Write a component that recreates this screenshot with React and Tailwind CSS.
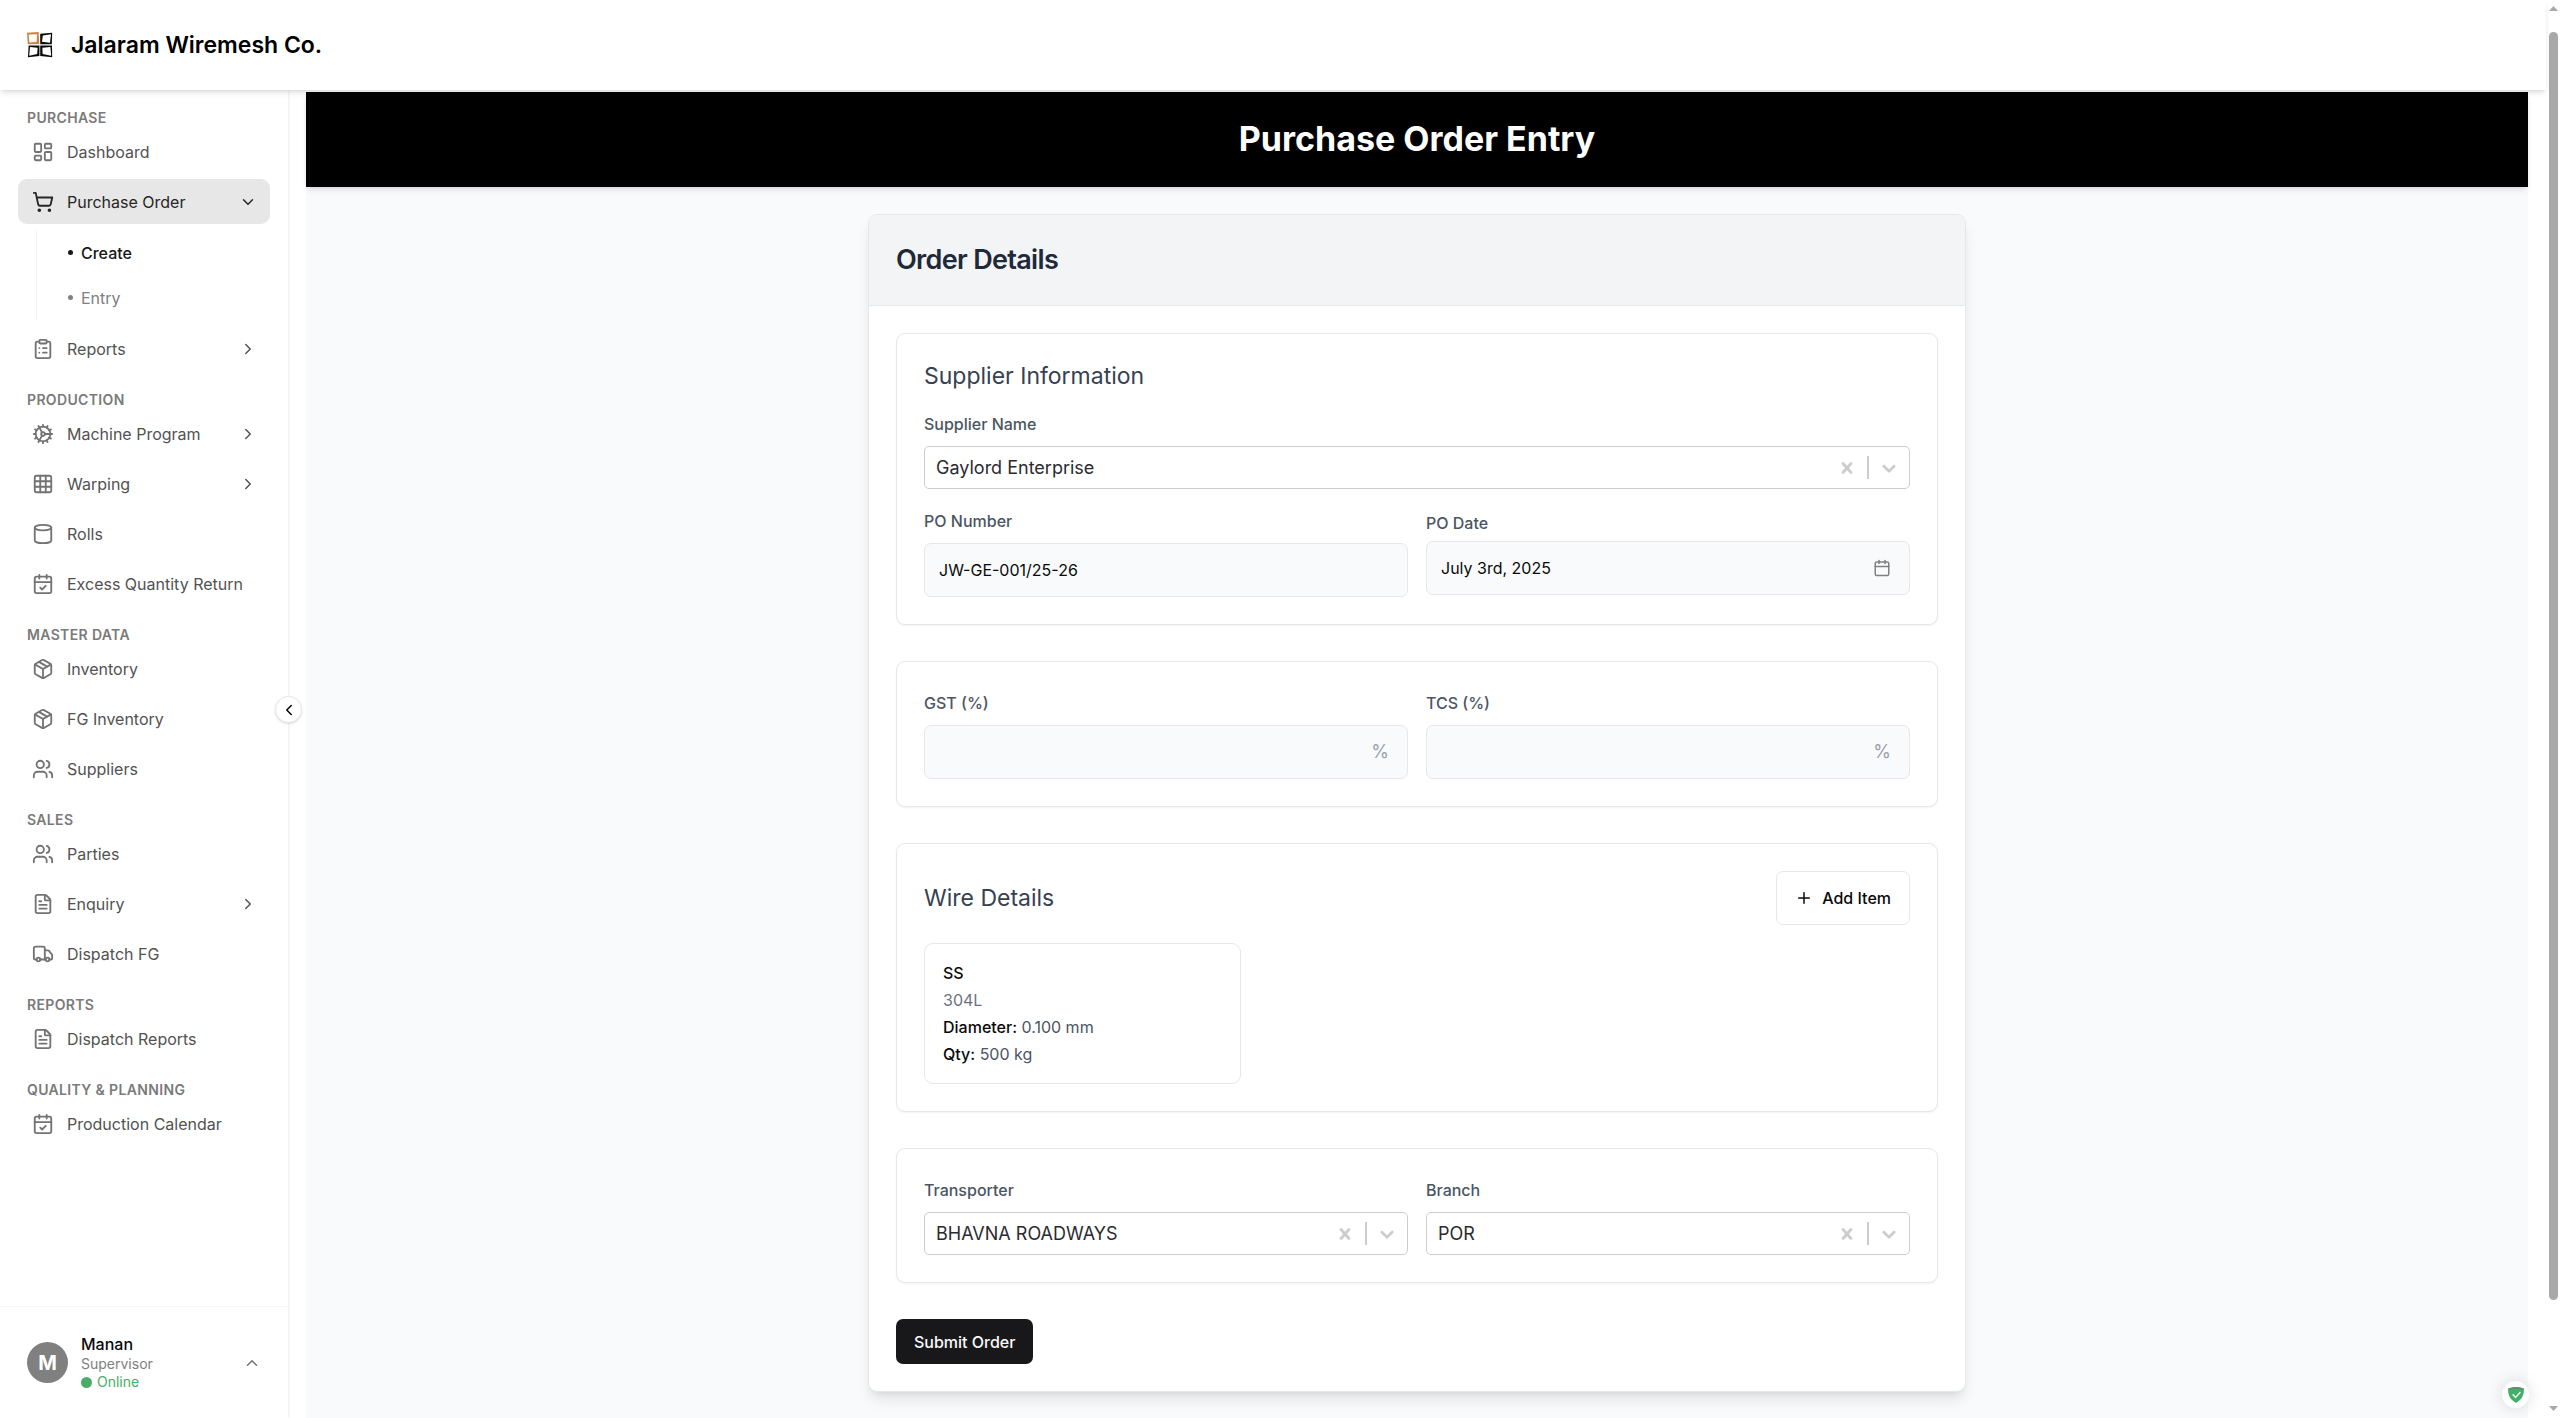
import React from "react";
import {
  LayoutDashboard, ShoppingCart, ClipboardList, Cog, Grid3x3, Cylinder, CalendarCheck,
  Package, Users, FileText, Truck, ChevronDown, ChevronRight, ChevronLeft, ChevronUp,
  Calendar, Plus,
} from "lucide-react";

const groups = [
  {
    title: "Purchase",
    items: [
      { label: "Dashboard", icon: LayoutDashboard },
      {
        label: "Purchase Order", icon: ShoppingCart, open: true,
        children: [{ label: "Create", active: true }, { label: "Entry" }],
      },
      { label: "Reports", icon: ClipboardList, expandable: true },
    ],
  },
  {
    title: "Production",
    items: [
      { label: "Machine Program", icon: Cog, expandable: true },
      { label: "Warping", icon: Grid3x3, expandable: true },
      { label: "Rolls", icon: Cylinder },
      { label: "Excess Quantity Return", icon: CalendarCheck },
    ],
  },
  {
    title: "Master Data",
    items: [
      { label: "Inventory", icon: Package },
      { label: "FG Inventory", icon: Package },
      { label: "Suppliers", icon: Users },
    ],
  },
  {
    title: "Sales",
    items: [
      { label: "Parties", icon: Users },
      { label: "Enquiry", icon: FileText, expandable: true },
      { label: "Dispatch FG", icon: Truck },
    ],
  },
  { title: "Reports", items: [{ label: "Dispatch Reports", icon: FileText }] },
  { title: "Quality & Planning", items: [{ label: "Production Calendar", icon: CalendarCheck }] },
];

function Logo() {
  return (
    <svg width="26" height="26" viewBox="0 0 26 26" fill="none" aria-hidden="true">
      <path fillRule="evenodd" fill="#c9813f" d="M0 .8 L11.6 0 L12.2 12 L.8 12.2 Z M1.6 2.4 L2.4 10.6 L9.6 10 L10 2.2 Z" />
      <path fillRule="evenodd" fill="#0a0a0a" d="M13.2 1.8 L25.2 .8 L24.8 12.2 L13.2 12.2 Z M15.8 3.6 L15 9.8 L23 10.8 L24 2.2 Z" />
      <path fillRule="evenodd" fill="#0a0a0a" d="M1.6 13.4 L12.4 13.4 V24 L1 25.2 Z M3 15 L2.2 23.8 L10.2 22 L10.6 15.8 Z" />
      <path fillRule="evenodd" fill="#0a0a0a" d="M13.2 13.4 L25 13.4 L25.2 25.2 L13.2 24 Z M15.4 15.8 L15.6 22 L24.2 23.8 L23.4 15 Z" />
    </svg>
  );
}

function NavItem({ item }) {
  const Icon = item.icon;
  if (item.open) {
    return (
      <li className="flex flex-col gap-[5px]">
        <button type="button" aria-expanded="true" className="flex h-[45px] w-full items-center gap-[13px] rounded-[9px] bg-[#e7e7e7] pr-[13px] pl-[14px] text-left text-[#262626]">
          <Icon size={22} strokeWidth={2} />
          <span className="flex-1">{item.label}</span>
          <ChevronDown size={18} />
        </button>
        <ul className="ml-[18px] border-l border-gray-100 py-px pl-[31px]">
          {item.children.map((child) => (
            <li key={child.label}>
              <a
                href="#"
                className={
                  child.active
                    ? "flex h-[45px] items-center gap-2 font-medium text-[#171717]"
                    : "flex h-[45px] items-center gap-2 text-[#808080]"
                }
              >
                <span className="size-[5px] rounded-full bg-current" />
                {child.label}
              </a>
            </li>
          ))}
        </ul>
      </li>
    );
  }
  const cls = "flex h-[45px] w-full items-center gap-[13px] rounded-[9px] pr-[13px] pl-[14px] text-left text-[#525252]";
  const body = (
    <>
      <Icon size={22} className="text-[#737373]" />
      <span className="flex-1 whitespace-nowrap">{item.label}</span>
      {item.expandable && <ChevronRight size={18} />}
    </>
  );
  return (
    <li>
      {item.expandable ? (
        <button type="button" aria-expanded="false" className={cls}>{body}</button>
      ) : (
        <a href="#" className={cls}>{body}</a>
      )}
    </li>
  );
}

function Sidebar() {
  return (
    <aside className="relative flex w-[288px] shrink-0 flex-col bg-white shadow-[1px_0_2px_rgba(15,23,42,0.08)]">
      <nav className="flex flex-1 flex-col gap-5 px-[18px] pt-[19px]">
        {groups.map((g) => (
          <section key={g.title}>
            <h2 className="mb-[2px] pl-[9px] text-[14px] leading-[18px] font-semibold tracking-wide text-[#7a7a7a] uppercase">
              {g.title}
            </h2>
            <ul className="flex flex-col gap-[5px]">
              {g.items.map((i) => <NavItem key={i.label} item={i} />)}
            </ul>
          </section>
        ))}
      </nav>
      <div className="border-t border-neutral-100 px-[18px] py-[18px]">
        <button type="button" className="flex w-full items-center gap-[13px] py-[9px] pr-[9px] pl-[9px] text-left">
          <span className="flex size-[41px] items-center justify-center rounded-full bg-[#808080] text-[20px] font-bold text-white">M</span>
          <span className="flex flex-1 flex-col">
            <span className="leading-[20px] font-medium text-[#0a0a0a]">Manan</span>
            <span className="text-[14px] leading-[19px] text-[#808080]">Supervisor</span>
            <span className="flex items-center gap-[5px] text-[14px] leading-[18px] text-[#48ad67]">
              <span className="size-[11px] rounded-full bg-current" />
              Online
            </span>
          </span>
          <ChevronUp size={18} className="text-[#737373]" />
        </button>
      </div>
      <button type="button" aria-label="Collapse sidebar" className="absolute top-[606px] -right-[14px] flex size-[27px] items-center justify-center rounded-full border border-gray-200 bg-white text-black shadow-sm">
        <ChevronLeft size={18} />
      </button>
    </aside>
  );
}

function Field({ id, label, children }) {
  return (
    <div>
      <label htmlFor={id} className="mb-2 block leading-[28px] font-medium text-[#4b5563]">{label}</label>
      {children}
    </div>
  );
}

function SelectBox({ id, label, value }) {
  return (
    <Field id={id} label={label}>
      <div className="flex h-[43px] items-center rounded-[5px] border border-[#cccccc] bg-white text-[#cccccc]">
        <select id={id} defaultValue={value} className="h-full min-w-0 flex-1 appearance-none bg-transparent pl-[11px] text-[18px] text-[#2b2b2f] outline-none">
          <option>{value}</option>
        </select>
        <button type="button" aria-label={"Clear " + label} className="px-[9px]">
          <svg width="22" height="22" viewBox="0 0 20 20" fill="currentColor" stroke="currentColor" strokeWidth="0.4">
            <path d="M14.348 14.849c-0.469 0.469-1.229 0.469-1.697 0l-2.651-3.030-2.651 3.029c-0.469 0.469-1.229 0.469-1.697 0-0.469-0.469-0.469-1.229 0-1.697l2.758-3.15-2.759-3.152c-0.469-0.469-0.469-1.228 0-1.697s1.228-0.469 1.697 0l2.652 3.031 2.651-3.031c0.469-0.469 1.228-0.469 1.697 0s0.469 1.229 0 1.697l-2.758 3.152 2.758 3.15c0.469 0.469 0.469 1.229 0 1.698z" />
          </svg>
        </button>
        <span className="h-[23px] w-[2px] bg-[#cccccc]" />
        <span className="px-[9px]">
          <svg width="22" height="22" viewBox="0 0 20 20" fill="currentColor" stroke="currentColor" strokeWidth="0.4" aria-hidden="true">
            <path d="M4.516 7.548c0.436-0.446 1.043-0.481 1.576 0l3.908 3.747 3.908-3.747c0.533-0.481 1.141-0.446 1.574 0 0.436 0.445 0.408 1.197 0 1.615-0.406 0.418-4.695 4.502-4.695 4.502-0.217 0.223-0.502 0.335-0.787 0.335s-0.57-0.112-0.789-0.335c0 0-4.287-4.084-4.695-4.502s-0.436-1.17 0-1.615z" />
          </svg>
        </span>
      </div>
    </Field>
  );
}

function PercentField({ id, label }) {
  return (
    <Field id={id} label={label}>
      <div className="flex h-[54px] items-center rounded-[7px] border border-gray-200 bg-gray-50 pr-[18px]">
        <input id={id} type="text" inputMode="decimal" className="h-full min-w-0 flex-1 bg-transparent pl-[14px] outline-none" />
        <span className="text-[18px] text-gray-400">%</span>
      </div>
    </Field>
  );
}

function Panel({ children }) {
  return <section className="rounded-[9px] border border-gray-200 bg-white p-[27px] shadow-xs">{children}</section>;
}

function OrderForm() {
  return (
    <form className="flex flex-col items-stretch gap-9 p-[27px]" onSubmit={(e) => e.preventDefault()}>
      <Panel>
        <h3 className="mb-[18px] text-[23px] leading-[31px] text-gray-700">Supplier Information</h3>
        <SelectBox id="supplier" label="Supplier Name" value="Gaylord Enterprise" />
        <div className="mt-[18px] grid grid-cols-2 gap-[18px]">
          <Field id="po-number" label="PO Number">
            <input id="po-number" type="text" defaultValue="JW-GE-001/25-26" className="h-[54px] w-full rounded-[7px] border border-gray-200 bg-gray-50 px-[14px] text-[#0a0a0a] outline-none" />
          </Field>
          <div className="flex flex-col gap-2 pt-[6px]">
            <label htmlFor="po-date" className="leading-[20px] font-medium text-[#4b5563]">PO Date</label>
            <button id="po-date" type="button" className="flex h-[54px] w-full items-center justify-between rounded-[7px] border border-gray-200 bg-gray-50 pr-[18px] pl-[14px] text-[#0a0a0a]">
              July 3rd, 2025
              <Calendar size={18} className="text-[#808080]" />
            </button>
          </div>
        </div>
      </Panel>
      <Panel>
        <div className="grid grid-cols-2 gap-[18px]">
          <PercentField id="gst" label="GST (%)" />
          <PercentField id="tcs" label="TCS (%)" />
        </div>
      </Panel>
      <Panel>
        <div className="mb-[18px] flex items-center justify-between">
          <h3 className="text-[23px] leading-[31px] text-gray-700">Wire Details</h3>
          <button type="button" className="flex h-[54px] items-center gap-[9px] rounded-[7px] border border-gray-200 bg-white px-[18px] font-medium text-[#0a0a0a]">
            <Plus size={18} />
            Add Item
          </button>
        </div>
        <div className="grid grid-cols-3 gap-[18px]">
          <article className="flex flex-col gap-[5px] rounded-[9px] border border-gray-200 p-[18px] leading-[22px] text-gray-600">
            <p className="font-medium text-[#0a0a0a]">SS</p>
            <p className="text-gray-500">304L</p>
            <p><span className="font-medium text-[#0a0a0a]">Diameter:</span> 0.100 mm</p>
            <p><span className="font-medium text-[#0a0a0a]">Qty:</span> 500 kg</p>
          </article>
        </div>
      </Panel>
      <Panel>
        <div className="grid grid-cols-2 gap-[18px]">
          <SelectBox id="transporter" label="Transporter" value="BHAVNA ROADWAYS" />
          <SelectBox id="branch" label="Branch" value="POR" />
        </div>
      </Panel>
      <button type="submit" className="h-[45px] self-start rounded-[7px] bg-[#18181b] px-[18px] font-medium text-[#fafafa]">Submit Order</button>
    </form>
  );
}

export default function App() {
  return (
    <div className="flex min-h-screen bg-white font-[Inter,sans-serif] text-[16px] leading-[24px]">
      <div className="flex min-w-0 flex-1 flex-col">
        <header className="relative z-10 flex h-[90px] items-center gap-[18px] bg-white pl-[27px] shadow-md">
          <Logo />
          <h1 className="text-[23px] font-semibold text-black">Jalaram Wiremesh Co.</h1>
        </header>
        <div className="flex flex-1">
          <Sidebar />
          <main className="flex min-w-0 flex-1 flex-col px-[18px] pt-[2px]">
            <div className="flex flex-1 flex-col bg-gray-50">
              <div className="bg-black pt-[26px] pb-[28px] text-center shadow-md">
                <h2 className="text-[34px] leading-[41px] font-bold text-white">Purchase Order Entry</h2>
              </div>
              <div className="mx-auto w-full max-w-[1152px] px-[27px] pt-[27px] pb-[26px]">
                <div className="rounded-[9px] border border-gray-200 bg-white shadow-lg">
                  <div className="rounded-t-[8px] border-b border-gray-200 bg-gray-100 p-[27px]">
                    <h2 className="text-[27px] leading-[36px] font-semibold tracking-tight text-gray-800">Order Details</h2>
                  </div>
                  <OrderForm />
                </div>
              </div>
            </div>
          </main>
        </div>
      </div>
      <div aria-hidden="true" className="flex w-[15px] shrink-0 flex-col items-center bg-white pt-[6px] pb-[7px]">
        <svg width="9" height="5" viewBox="0 0 9 5"><path d="M0 5 L4.5 0 L9 5 Z" fill="#a8a8a8" /></svg>
        <span className="mt-[21px] mb-[106px] w-[9px] flex-1 rounded-full bg-[#a8a8a8]" />
        <svg width="9" height="5" viewBox="0 0 9 5"><path d="M0 0 L4.5 5 L9 0 Z" fill="#a8a8a8" /></svg>
      </div>
      <div className="fixed right-[32px] bottom-[10px] flex size-[27px] items-center justify-center rounded-full bg-white shadow-[0_0_16px_rgba(0,0,0,0.14)]">
        <svg width="16" height="16" viewBox="0 0 16 16" aria-hidden="true">
          <path d="M8 0 C5.5 0 2.4 .6 0 1.8 C0 7.5 1.6 12.6 8 16 C14.4 12.6 16 7.5 16 1.8 C13.6 .6 10.5 0 8 0 Z" fill="#43b069" />
          <path d="M8 0 C5.5 0 2.4 .6 0 1.8 V3 C3 1.6 13 1.6 16 3 V1.8 C13.6 .6 10.5 0 8 0 Z" fill="#6f8a78" />
          <path d="M4.6 7.4 L7.6 10.4 L12.4 5" stroke="#e3f3e8" strokeWidth="1.5" fill="none" />
        </svg>
      </div>
    </div>
  );
}
